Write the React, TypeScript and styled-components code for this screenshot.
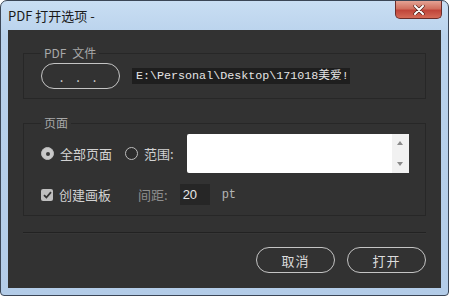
import { createGlobalStyle, styled } from 'styled-components';

const GlobalStyle = createGlobalStyle`
  body {
    margin: 0;
    background: #ffffff;
    font-family: "Noto Sans CJK SC", "Noto Sans", sans-serif;
  }
`;

const Window = styled.div`
  width: 449px;
  height: 296px;
  box-sizing: border-box;
  display: flex;
  flex-direction: column;
  padding: 0 7px 7px;
  border: 1px solid #3b4656;
  border-radius: 7px 7px 4px 4px;
  background: linear-gradient(180deg, #c9def3 0%, #b9d2ec 12%, #b3cce8 100%);
`;

const TitleBar = styled.div`
  height: 29px;
  display: flex;
  justify-content: space-between;
  align-items: flex-start;
`;

const Title = styled.span`
  line-height: 29px;
  font-size: 13px;
  color: #1a1a1a;
`;

const CloseButton = styled.button`
  width: 47px;
  height: 18px;
  margin-right: -1px;
  padding: 0;
  border: 1px solid #6b2d2a;
  border-top: none;
  border-radius: 0 0 5px 5px;
  background: linear-gradient(180deg, #e4a294 0%, #d0705f 45%, #c0453a 55%, #d46a57 100%);
  display: flex;
  align-items: center;
  justify-content: center;
`;

const Content = styled.div`
  flex: 1;
  background: #323232;
  padding: 0 15px;
  display: flex;
  flex-direction: column;
`;

const Group = styled.fieldset<{ $top: number; $pad: string }>`
  margin: ${(p) => p.$top}px 0 0;
  padding: ${(p) => p.$pad};
  min-width: 0;
  border: 1px solid #272727;
  display: flex;
  flex-direction: column;
`;

const Legend = styled.legend`
  padding: 0 3px;
  font-size: 12px;
  line-height: 14px;
  color: #a8a8a8;
  word-spacing: 3px;
`;

const Row = styled.div<{ $height?: number }>`
  display: flex;
  align-items: center;
  height: ${(p) => (p.$height ? `${p.$height}px` : 'auto')};
`;

const PillButton = styled.button<{ $width: number; $spacing?: number }>`
  width: ${(p) => p.$width}px;
  height: 26px;
  padding: 0;
  border: 1.5px solid #c4c4c4;
  border-radius: 13px;
  background: transparent;
  color: #dcdcdc;
  font-family: "Noto Sans CJK SC", "Noto Sans", sans-serif;
  font-size: 13px;
  letter-spacing: ${(p) => p.$spacing ?? 1}px;
`;

const PathBox = styled.div`
  width: 218px;
  height: 16px;
  margin-left: 12px;
  background: #1e1e1e;
  color: #e4e4e4;
  font-family: "Liberation Mono", "Noto Sans CJK SC", monospace;
  font-size: 11.7px;
  line-height: 16px;
  padding-left: 4px;
  box-sizing: border-box;
  white-space: nowrap;
`;

const Option = styled.label<{ $gap?: number }>`
  display: flex;
  align-items: center;
  gap: 6px;
  margin-right: ${(p) => p.$gap ?? 0}px;
  font-size: 13px;
  color: #d2d2d2;
`;

const Radio = styled.span<{ $checked?: boolean }>`
  width: 13px;
  height: 13px;
  box-sizing: border-box;
  border-radius: 50%;
  border: 1.5px solid #bdbdbd;
  background: ${(p) => (p.$checked ? '#c9c9c9' : '#2c2c2c')};
  display: flex;
  align-items: center;
  justify-content: center;

  &::after {
    content: '';
    width: 4px;
    height: 4px;
    border-radius: 50%;
    background: ${(p) => (p.$checked ? '#3a3a3a' : 'transparent')};
  }
`;

const Check = styled.span`
  width: 12px;
  height: 12px;
  border-radius: 2px;
  background: #bfbfbf;
  display: flex;
  align-items: center;
  justify-content: center;
`;

const RangeField = styled.div`
  width: 222px;
  height: 39px;
  background: #ffffff;
  border-radius: 2px;
  display: flex;
  justify-content: flex-end;
`;

const Spinner = styled.div`
  width: 17px;
  background: #f1f1f1;
  display: flex;
  flex-direction: column;
  justify-content: space-between;
  align-items: center;
  padding: 7px 0;
  box-sizing: border-box;
`;

const Arrow = styled.span<{ $down?: boolean }>`
  width: 0;
  height: 0;
  border-left: 3.5px solid transparent;
  border-right: 3.5px solid transparent;
  ${(p) => (p.$down ? 'border-top: 4px solid #8a8a8a;' : 'border-bottom: 4px solid #8a8a8a;')}
`;

const FieldLabel = styled.span`
  margin-left: 27px;
  font-size: 13px;
  color: #8e8e8e;
`;

const NumberBox = styled.div`
  width: 30px;
  height: 21px;
  margin-left: 12px;
  background: #262626;
  color: #e6e6e6;
  font-family: "Liberation Sans", sans-serif;
  font-size: 13px;
  line-height: 21px;
  padding-left: 3px;
  box-sizing: border-box;
`;

const Unit = styled.span`
  margin-left: 12px;
  font-family: "Liberation Mono", monospace;
  font-size: 12px;
  color: #b4b4b4;
`;

const Separator = styled.div`
  margin-top: 16px;
  border-top: 1px solid #222222;
  border-bottom: 1px solid #363636;
`;

const Actions = styled.div`
  margin-top: 13px;
  display: flex;
  justify-content: flex-end;
  gap: 12px;
`;

export default function App() {
  return (
    <>
      <GlobalStyle />
      <Window>
        <TitleBar>
          <Title>PDF 打开选项 -</Title>
          <CloseButton aria-label="关闭">
            <svg width="12" height="10" viewBox="0 0 12 10">
              <path d="M2 1 L10 9 M10 1 L2 9" stroke="#4a1a14" strokeWidth="3.2" strokeLinecap="round" />
              <path d="M2 1 L10 9 M10 1 L2 9" stroke="#ffffff" strokeWidth="2" strokeLinecap="round" />
            </svg>
          </CloseButton>
        </TitleBar>
        <Content>
          <Group $top={16} $pad="3px 0 9px 17px">
            <Legend>PDF 文件</Legend>
            <Row>
              <PillButton $width={79} $spacing={5}>. . .</PillButton>
              <PathBox>E:\Personal\Desktop\171018美爱!</PathBox>
            </Row>
          </Group>
          <Group $top={17} $pad="4px 0 10px 17px">
            <Legend>页面</Legend>
            <Row $height={39}>
              <Option $gap={13}>
                <Radio $checked />
                全部页面
              </Option>
              <Option $gap={13}>
                <Radio />
                范围:
              </Option>
              <RangeField>
                <Spinner>
                  <Arrow />
                  <Arrow $down />
                </Spinner>
              </RangeField>
            </Row>
            <Row $height={21} style={{ marginTop: 11 }}>
              <Option>
                <Check>
                  <svg width="9" height="8" viewBox="0 0 9 8">
                    <path d="M1 4.2 L3.4 6.5 L8 1.2" fill="none" stroke="#333" strokeWidth="1.8" />
                  </svg>
                </Check>
                创建画板
              </Option>
              <FieldLabel>间距:</FieldLabel>
              <NumberBox>20</NumberBox>
              <Unit>pt</Unit>
            </Row>
          </Group>
          <Separator />
          <Actions>
            <PillButton $width={79}>取消</PillButton>
            <PillButton $width={79}>打开</PillButton>
          </Actions>
        </Content>
      </Window>
    </>
  );
}
